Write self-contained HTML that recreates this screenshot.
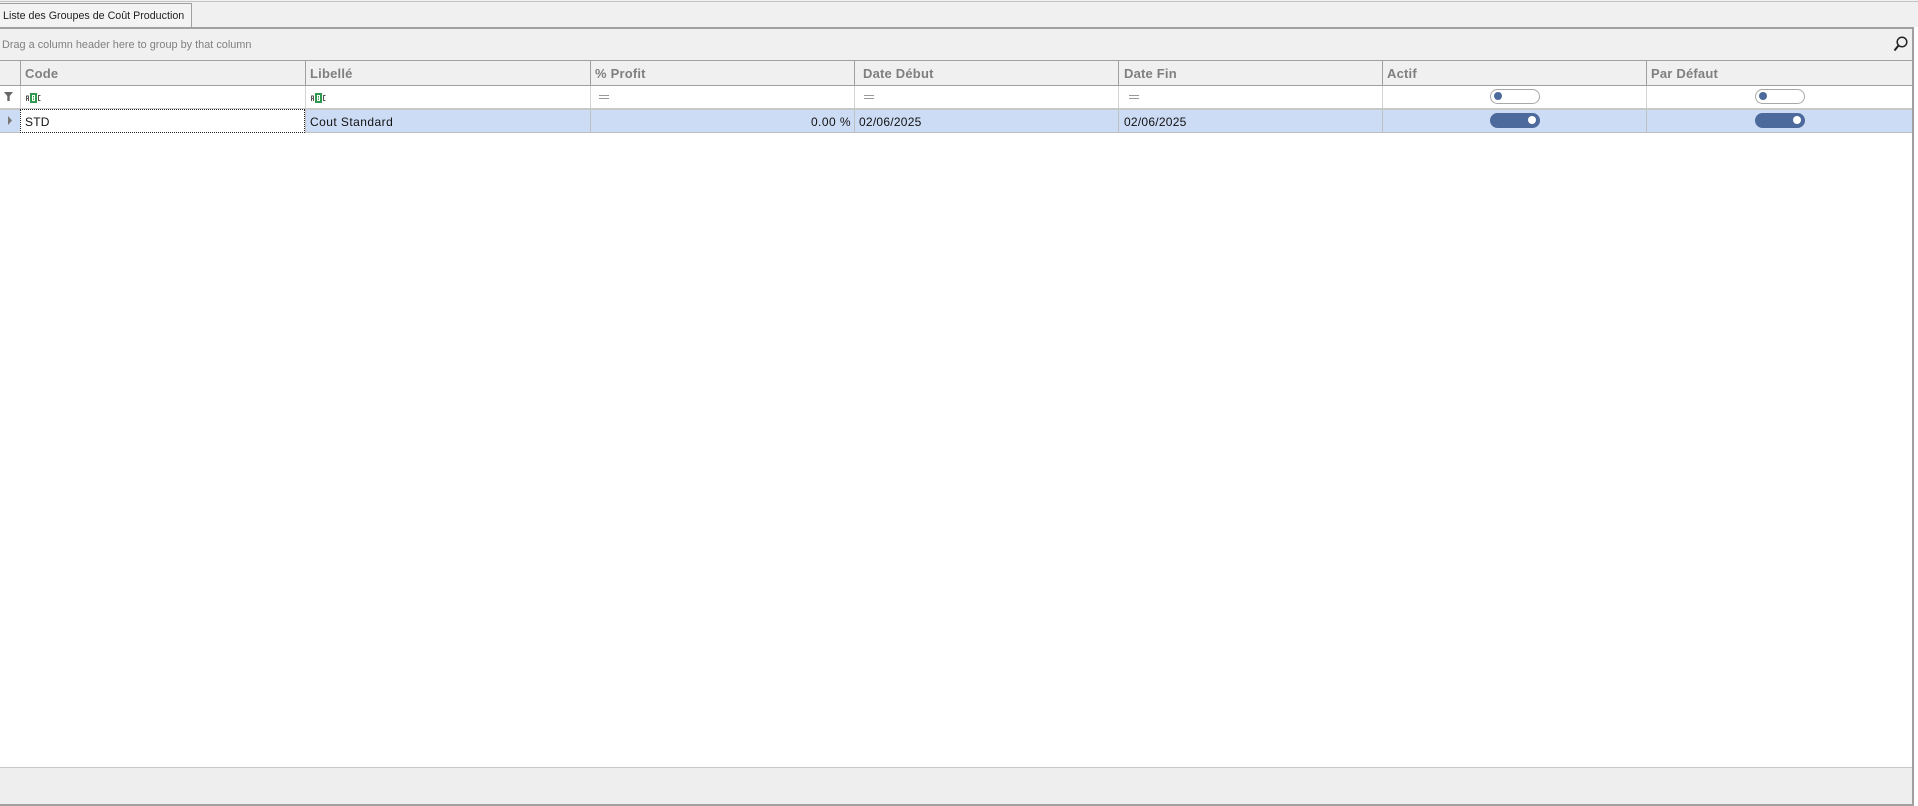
<!DOCTYPE html>
<html><head><meta charset="utf-8"><style>
html,body{margin:0;padding:0;width:1918px;height:806px;overflow:hidden;background:#fff;font-family:"Liberation Sans",sans-serif}
div,span{position:absolute;white-space:nowrap;box-sizing:border-box}
.h{top:66px;font-size:13px;font-weight:bold;color:#7f7f7f;line-height:15px;letter-spacing:.2px}
.v{top:61px;width:1px;height:24px;background:#a0a0a0}
.f{top:86px;width:1px;height:22px;background:#d4d4d4}
.r{top:110px;width:1px;height:22px;background:#c0c0c0}
.t{top:115px;font-size:12px;color:#111;line-height:15px;letter-spacing:.45px}
.eq{top:95px;width:10px;height:4px;border-top:1px solid #999;border-bottom:1px solid #999}
.abc{top:90px;width:18px;height:14px}
</style></head><body>
<div style="left:0;top:0;width:1918px;height:27px;background:#f0f0f0"></div>
<div style="left:0;top:1px;width:1918px;height:1px;background:#c4c4c4"></div>
<div style="left:0;top:3px;width:192px;height:24px;background:#f3f3f3;border:1px solid #a0a0a0;border-left:0;border-bottom:0"></div>
<div style="left:3px;top:9px;font-size:10.7px;line-height:14px;color:#222">Liste des Groupes de Coût Production</div>
<div style="left:0;top:27px;width:1914px;height:2px;background:#a0a0a0"></div>
<div style="left:0;top:29px;width:1912px;height:31px;background:#f0f0f0"></div>
<div style="left:2px;top:38px;font-size:10.9px;line-height:15px;color:#808080">Drag a column header here to group by that column</div>
<svg style="position:absolute;left:1892px;top:35px" width="17" height="17" viewBox="0 0 17 17"><circle cx="10" cy="7" r="4.8" fill="none" stroke="#222" stroke-width="1.5"/><path d="M6.500 10.500L2.500 15.500" stroke="#222" stroke-width="2"/></svg>
<div style="left:0;top:60px;width:1912px;height:1px;background:#a0a0a0"></div>
<div style="left:0;top:61px;width:1912px;height:24px;background:#f0f0f0"></div>
<div style="left:0;top:85px;width:1912px;height:1px;background:#a0a0a0"></div>
<div style="left:0;top:108px;width:1912px;height:2px;background:#c8c8c8"></div>
<div style="left:0;top:110px;width:1912px;height:22px;background:#cddcf5"></div>
<div style="left:0;top:132px;width:1912px;height:1px;background:#c0c0c0"></div>
<div class="v" style="left:20px"></div><div class="v" style="left:305px"></div><div class="v" style="left:590px"></div><div class="v" style="left:854px"></div><div class="v" style="left:1118px"></div><div class="v" style="left:1382px"></div><div class="v" style="left:1646px"></div>
<div class="f" style="left:20px"></div><div class="f" style="left:305px"></div><div class="f" style="left:590px"></div><div class="f" style="left:854px"></div><div class="f" style="left:1118px"></div><div class="f" style="left:1382px"></div><div class="f" style="left:1646px"></div>
<div class="r" style="left:305px"></div><div class="r" style="left:590px"></div><div class="r" style="left:854px"></div><div class="r" style="left:1118px"></div><div class="r" style="left:1382px"></div><div class="r" style="left:1646px"></div>
<div class="h" style="left:25px">Code</div><div class="h" style="left:310px">Libellé</div><div class="h" style="left:595px">% Profit</div><div class="h" style="left:863px">Date Début</div><div class="h" style="left:1124px">Date Fin</div><div class="h" style="left:1387px">Actif</div><div class="h" style="left:1651px">Par Défaut</div>
<svg style="position:absolute;left:4px;top:92px" width="10" height="9" viewBox="0 0 10 9"><path d="M0 0H9L5.700 4V9H3.300V4Z" fill="#666"/></svg>
<svg style="position:absolute;left:7px;top:116px" width="6" height="9" viewBox="0 0 6 9"><path d="M1 0L5 4.500L1 9Z" fill="#777"/></svg>
<svg class="abc" style="position:absolute;left:25px;top:90px" width="18" height="14" viewBox="0 0 18 14"><rect x="5" y="3" width="7" height="10" fill="#2f9a4f"/><path d="M1.500 11V6H3.500V11M1.500 8.500H3.500M15.500 5.500H13.500V10.500H15.500" fill="none" stroke="#555" stroke-width="1"/><path d="M7.500 5.500H9.500V10.500H7.500ZM7.500 8H9.500" fill="none" stroke="#fff"/></svg>
<svg class="abc" style="position:absolute;left:310px;top:90px" width="18" height="14" viewBox="0 0 18 14"><rect x="5" y="3" width="7" height="10" fill="#2f9a4f"/><path d="M1.500 11V6H3.500V11M1.500 8.500H3.500M15.500 5.500H13.500V10.500H15.500" fill="none" stroke="#555" stroke-width="1"/><path d="M7.500 5.500H9.500V10.500H7.500ZM7.500 8H9.500" fill="none" stroke="#fff"/></svg>
<div class="eq" style="left:599px"></div><div class="eq" style="left:864px"></div><div class="eq" style="left:1129px"></div>
<div style="left:1490px;top:89px;width:50px;height:15px;border:1px solid #a8a8a8;border-radius:8px;background:#fff"></div>
<div style="left:1494px;top:92px;width:8px;height:8px;border-radius:50%;background:#4c6a9c"></div>
<div style="left:1755px;top:89px;width:50px;height:15px;border:1px solid #a8a8a8;border-radius:8px;background:#fff"></div>
<div style="left:1759px;top:92px;width:8px;height:8px;border-radius:50%;background:#4c6a9c"></div>
<div style="left:1490px;top:113px;width:50px;height:15px;border-radius:8px;background:#4c6a9c"></div>
<div style="left:1528px;top:116px;width:8px;height:8px;border-radius:50%;background:#fff"></div>
<div style="left:1755px;top:113px;width:50px;height:15px;border-radius:8px;background:#4c6a9c"></div>
<div style="left:1793px;top:116px;width:8px;height:8px;border-radius:50%;background:#fff"></div>
<div style="left:20px;top:109px;width:285px;height:24px;background:#fff;border:1px dotted #222"></div>
<div class="t" style="left:25px;letter-spacing:.2px">STD</div><div class="t" style="left:310px">Cout Standard</div><div class="t" style="right:1067px">0.00 %</div><div class="t" style="left:859px;letter-spacing:.25px">02/06/2025</div><div class="t" style="left:1124px;letter-spacing:.25px">02/06/2025</div>
<div style="left:0;top:767px;width:1912px;height:1px;background:#c8c8c8"></div>
<div style="left:0;top:768px;width:1912px;height:36px;background:#eeeeee"></div>
<div style="left:0;top:804px;width:1914px;height:2px;background:#a0a0a0"></div>
<div style="left:1912px;top:27px;width:2px;height:779px;background:#a0a0a0"></div>
</body></html>
